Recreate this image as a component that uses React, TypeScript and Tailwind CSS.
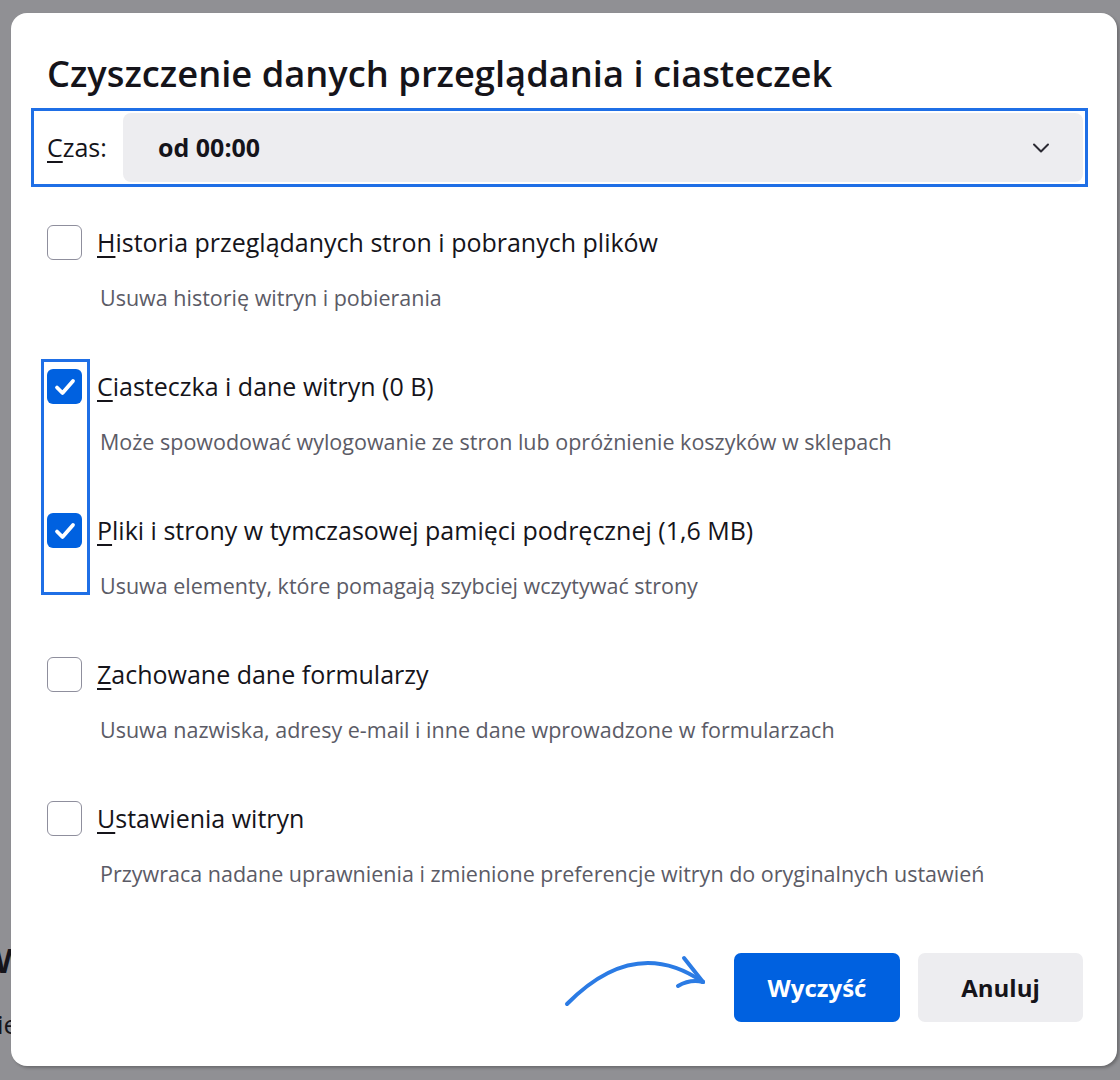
import React from "react";

const font = { fontFamily: '"Open Sans", "Noto Sans", sans-serif' };

type Item = { key: string; rest: string; desc: string; checked: boolean };

const items: Item[] = [
  { key: "H", rest: "istoria przeglądanych stron i pobranych plików", desc: "Usuwa historię witryn i pobierania", checked: false },
  { key: "C", rest: "iasteczka i dane witryn (0 B)", desc: "Może spowodować wylogowanie ze stron lub opróżnienie koszyków w sklepach", checked: true },
  { key: "P", rest: "liki i strony w tymczasowej pamięci podręcznej (1,6 MB)", desc: "Usuwa elementy, które pomagają szybciej wczytywać strony", checked: true },
  { key: "Z", rest: "achowane dane formularzy", desc: "Usuwa nazwiska, adresy e-mail i inne dane wprowadzone w formularzach", checked: false },
  { key: "U", rest: "stawienia witryn", desc: "Przywraca nadane uprawnienia i zmienione preferencje witryn do oryginalnych ustawień", checked: false },
];

function Checkbox({ checked }: { checked: boolean }) {
  if (checked) {
    return (
      <div className="w-[35px] h-[35px] shrink-0 rounded-[6px] bg-[#0061e0] flex items-center justify-center">
        <svg width="26" height="26" viewBox="0 0 26 26" fill="none">
          <path d="M5 13.5 L10.5 19 L21 7" stroke="white" strokeWidth="3.8" strokeLinecap="round" strokeLinejoin="round" />
        </svg>
      </div>
    );
  }
  return <div className="w-[35px] h-[35px] shrink-0 rounded-[6px] border-[1.5px] border-[#8f8f9d] bg-white" />;
}

function Row({ item }: { item: Item }) {
  return (
    <div className="h-[144px] flex flex-col">
      <div className="flex items-center gap-[15px] h-[35px]">
        <Checkbox checked={item.checked} />
        <span className="text-[25px] text-[#15141a]">
          <span className="underline underline-offset-[4px] decoration-[1.5px]">{item.key}</span>
          {item.rest}
        </span>
      </div>
      <div className="mt-[23px] pl-[53px] text-[21.5px] leading-[30px] text-[#5b5b66]">{item.desc}</div>
    </div>
  );
}

export default function App() {
  return (
    <div className="w-[1120px] h-[1080px] bg-[#909094] overflow-hidden relative" style={font}>
      <div className="absolute left-[-6px] top-[935px] text-[34px] font-bold text-[#15141a]">W</div>
      <div className="absolute left-[-3px] top-[1005px] text-[26px] text-[#15141a]">ie</div>

      <div className="absolute left-[11px] top-[13px] w-[1106px] h-[1053px] bg-white rounded-[16px] shadow-[2px_2px_3px_rgba(0,0,0,0.25)]">
        <div className="pl-[36px] pt-[42px] h-[55px]">
          <h1 className="text-[36.3px] font-semibold text-[#15141a] leading-[1]">
            Czyszczenie danych przeglądania i ciasteczek
          </h1>
        </div>

        <div className="mx-[20px] mt-[40px] w-[1057px] h-[79px] border-[3px] border-[#1f6fe6] flex items-center pl-[13px] pr-[2px]">
          <span className="text-[25px] text-[#15141a] w-[76px]">
            <span className="underline underline-offset-[4px] decoration-[1.5px]">C</span>zas:
          </span>
          <div className="flex-1 h-[69px] rounded-[8px] bg-[#ededf0] flex items-center pl-[35px] pr-[32px]">
            <span className="flex-1 text-[25px] font-bold text-[#15141a]">od 00:00</span>
            <svg width="20" height="12" viewBox="0 0 20 12" fill="none">
              <path d="M3 2.5 L10 9.5 L17 2.5" stroke="#2b2a33" strokeWidth="2" strokeLinecap="round" strokeLinejoin="round" />
            </svg>
          </div>
        </div>

        <div className="pl-[36px] mt-[38px]">
          {items.map((it) => (
            <Row key={it.key} item={it} />
          ))}
        </div>

        <div className="flex justify-end gap-[18px] pr-[34px] mt-[8px]">
          <button className="w-[166px] h-[69px] rounded-[7px] bg-[#0061e0] text-white text-[24px] font-bold">Wyczyść</button>
          <button className="w-[165px] h-[69px] rounded-[7px] bg-[#ededf0] text-[#15141a] text-[24px] font-bold">Anuluj</button>
        </div>

        <div className="absolute left-[30px] top-[346px] w-[49px] h-[236px] border-[3px] border-[#1f6fe6]" />

        <svg className="absolute left-0 top-0 pointer-events-none" width="1106" height="1053" viewBox="11 13 1106 1053" fill="none">
          <path d="M567 1004 Q635 935 703 982" stroke="#2b7be4" strokeWidth="4" strokeLinecap="round" />
          <path d="M684 958 L703 982" stroke="#2b7be4" strokeWidth="4" strokeLinecap="round" />
          <path d="M678 986 Q690 979 703 982" stroke="#2b7be4" strokeWidth="4" strokeLinecap="round" />
        </svg>
      </div>
    </div>
  );
}
